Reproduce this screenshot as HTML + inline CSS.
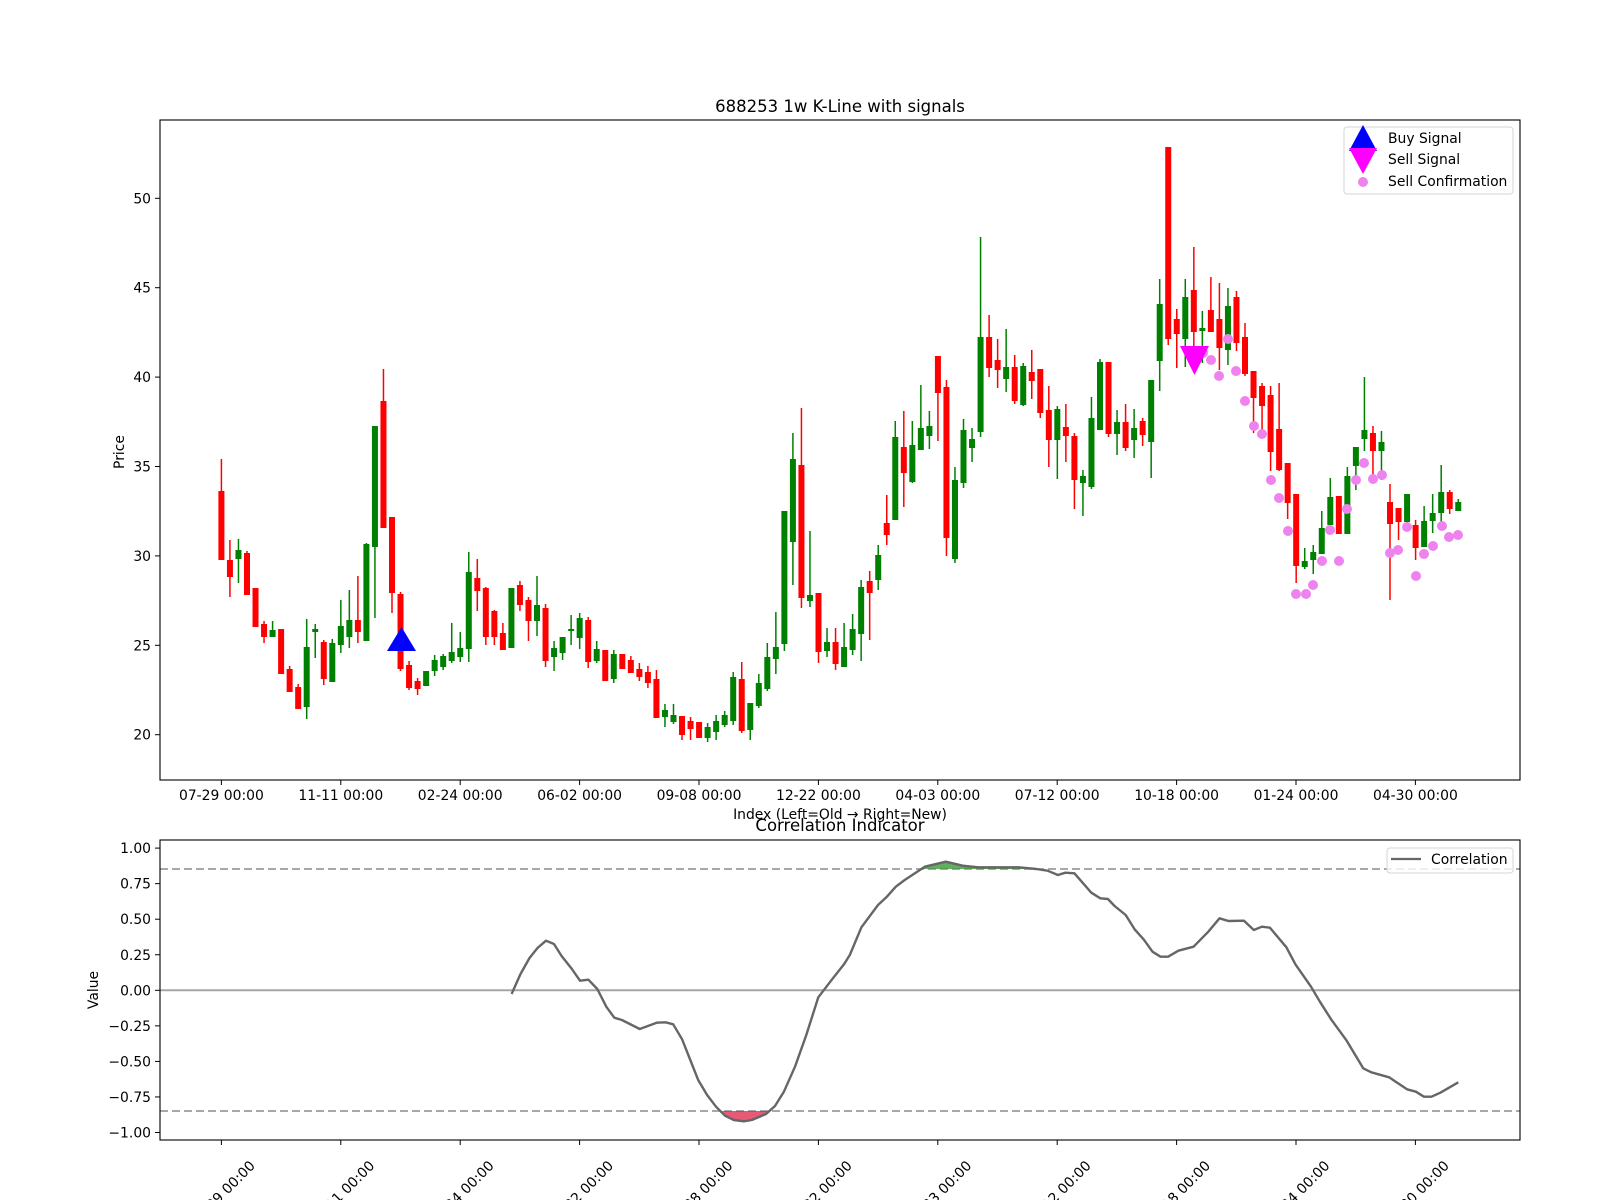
<!DOCTYPE html>
<html><head><meta charset="utf-8">
<style>
html,body{margin:0;padding:0;background:#fff;}
svg{display:block;font-family:"DejaVu Sans","Liberation Sans",sans-serif;}
</style></head>
<body>
<svg id="s" width="1600" height="1200" viewBox="0 0 1600 1200" xmlns="http://www.w3.org/2000/svg">
<rect width="1600" height="1200" fill="#fff"/>
<defs>
<clipPath id="cTop"><rect x="160" y="120" width="1360" height="660"/></clipPath>
<clipPath id="cBot"><rect x="160" y="840" width="1360" height="300"/></clipPath>
<clipPath id="cG"><rect x="160" y="840" width="1360" height="29"/></clipPath>
<clipPath id="cR"><rect x="160" y="1111" width="1360" height="29"/></clipPath>
</defs>
<g id="top" clip-path="url(#cTop)"></g>
<g id="bot" clip-path="url(#cBot)"></g>
<g id="axes"></g>
<text x="840" y="112" font-size="16.5" text-anchor="middle" fill="#000">688253 1w K-Line with signals</text>
<text x="840" y="819" font-size="13.9" text-anchor="middle" fill="#000">Index (Left=Old → Right=New)</text>
<text x="840" y="831" font-size="16.5" text-anchor="middle" fill="#000">Correlation Indicator</text>
<text x="0" y="0" font-size="13.9" text-anchor="middle" fill="#000" transform="translate(124,452) rotate(-90)">Price</text>
<text x="0" y="0" font-size="13.9" text-anchor="middle" fill="#000" transform="translate(98,990) rotate(-90)">Value</text>
<rect x="1344" y="127" width="169" height="67" rx="3" fill="#fff" fill-opacity="0.8" stroke="#d5d5d5" stroke-width="1"/>
<polygon points="1363,125 1349,151 1377,151" fill="#0000ff"/>
<polygon points="1349,148 1377,148 1363,174" fill="#ff00ff"/>
<circle cx="1363" cy="182" r="5" fill="#ee82ee"/>
<text x="1388" y="143" font-size="13.9" fill="#000">Buy Signal</text>
<text x="1388" y="164" font-size="13.9" fill="#000">Sell Signal</text>
<text x="1388" y="186" font-size="13.9" fill="#000">Sell Confirmation</text>
<rect x="1387" y="848" width="126" height="25" rx="3" fill="#fff" fill-opacity="0.8" stroke="#d5d5d5" stroke-width="1"/>
<line x1="1391" y1="859" x2="1421" y2="859" stroke="#666" stroke-width="2.2"/>
<text x="1431" y="864" font-size="13.9" fill="#000">Correlation</text>
</svg>
<script>
(function(){
var NS="http://www.w3.org/2000/svg";
function el(t,a,p){var e=document.createElementNS(NS,t);for(var k in a)e.setAttribute(k,a[k]);p.appendChild(e);return e;}
var top=document.getElementById('top'),bot=document.getElementById('bot'),ax=document.getElementById('axes');
var C=[
[0,'r',491,560,459,560],[1,'r',560,577,540,597],[2,'g',550,559,539,583],[3,'r',553,595,551,595],[4,'r',588,627,588,627],
[5,'r',624,637,621,643],[6,'g',630,637,621,637],[7,'r',629,674,629,674],[8,'r',669,692,666,692],[9,'r',687,709,684,709],
[10,'g',647,707,619,719],[11,'g',629,632,624,658],[12,'r',642,679,640,685],[13,'g',643,682,639,682],[14,'g',626,645,600,653],
[15,'g',620,637,590,648],[16,'r',620,632,576,643],[17,'g',544,641,543,641],[18,'g',426,547,426,618],[19,'r',401,528,369,528],
[20,'r',517,593,517,613],[21,'r',594,669,592,671],[22,'r',665,688,661,690],[23,'r',681,689,678,695],[24,'g',671,686,671,686],
[25,'g',660,671,655,676],[26,'g',656,667,654,670],[27,'g',652,661,623,663],[28,'g',648,657,632,662],[29,'g',572,649,552,662],
[30,'r',578,591,559,611],[31,'r',588,637,587,645],[32,'r',611,637,610,645],[33,'r',633,650,623,650],[34,'g',588,648,588,648],
[35,'r',585,605,581,611],[36,'r',600,621,597,641],[37,'g',605,621,576,636],[38,'r',608,661,604,667],[39,'g',648,657,641,671],
[40,'g',637,653,637,660],[41,'g',629,631,615,645],[42,'g',618,638,613,649],[43,'r',620,662,617,668],[44,'g',649,661,641,663],
[45,'r',650,681,650,681],[46,'g',654,679,650,683],[47,'r',654,669,654,669],[48,'r',660,673,656,673],[49,'r',669,677,663,681],
[50,'r',672,683,666,688],[51,'r',679,718,670,718],[52,'g',710,717,704,727],[53,'g',715,722,704,724],[54,'r',716,735,716,740],
[55,'r',721,729,717,740],[56,'r',722,738,722,738],[57,'g',727,738,723,742],[58,'g',721,732,715,740],[59,'g',715,725,711,727],
[60,'g',677,721,672,725],[61,'r',679,731,662,733],[62,'g',703,730,703,740],[63,'g',683,706,674,708],[64,'g',657,689,643,691],
[65,'g',647,659,612,674],[66,'g',511,644,511,651],[67,'g',459,542,433,585],[68,'r',465,598,408,608],[69,'g',595,601,531,607],
[70,'r',593,652,593,663],[71,'g',642,651,628,657],[72,'r',642,664,628,670],[73,'g',647,667,623,667],[74,'g',629,650,614,655],
[75,'g',587,634,580,661],[76,'r',581,593,571,640],[77,'g',555,580,545,590],[78,'r',523,535,495,545],[79,'g',437,520,421,520],
[80,'r',447,473,411,507],[81,'g',445,482,421,483],[82,'g',428,450,385,450],[83,'g',426,436,411,449],[84,'r',356,393,356,441],
[85,'r',387,538,380,556],[86,'g',480,559,467,563],[87,'g',430,483,419,488],[88,'g',439,448,428,462],[89,'g',337,432,237,437],
[90,'r',337,368,315,377],[91,'r',360,370,339,388],[92,'g',367,379,329,392],[93,'r',367,401,355,404],[94,'g',366,405,363,406],
[95,'r',372,381,350,399],[96,'r',369,413,369,418],[97,'r',410,440,386,467],[98,'g',409,440,406,479],[99,'r',427,436,404,462],
[100,'r',436,480,433,509],[101,'g',476,483,470,516],[102,'g',418,487,397,489],[103,'g',362,430,359,430],[104,'r',362,434,362,437],
[105,'g',422,434,410,455],[106,'r',422,448,404,451],[107,'g',428,440,409,458],[108,'r',421,435,418,446],[109,'g',380,442,380,478],
[110,'g',304,361,279,391],[111,'r',147,339,147,345],[112,'r',319,334,309,368],[113,'g',297,339,279,367],[114,'r',290,332,247,363],
[115,'g',328,331,311,363],[116,'r',310,332,277,332],[117,'r',319,348,283,370],[118,'g',306,350,288,365],[119,'r',297,343,291,351],
[120,'r',337,374,323,376],[121,'r',371,398,371,433],[122,'r',386,406,383,432],[123,'r',395,452,386,471],[124,'r',429,470,383,471],
[125,'r',463,503,463,519],[126,'r',494,566,494,583],[127,'g',561,567,548,569],[128,'g',552,560,545,574],[129,'g',528,554,511,554],
[130,'g',497,525,478,525],[131,'r',496,534,496,534],[132,'g',476,534,467,534],[133,'g',447,466,447,490],[134,'g',430,439,377,451],
[135,'r',433,451,426,476],[136,'g',442,451,431,480],[137,'r',502,524,484,600],[138,'r',508,522,508,540],[139,'g',494,522,494,530],
[140,'r',525,548,520,560],[141,'g',521,547,506,547],[142,'g',513,521,494,533],[143,'g',492,513,465,523],[144,'r',492,509,490,514],
[145,'g',502,511,499,511]];
C.forEach(function(c){
  var x=221.4+8.53*c[0],col=c[1]=='r'?'#ff0000':'#008000';
  el('line',{x1:x,y1:c[4],x2:x,y2:c[5],stroke:col,'stroke-width':1.5},top);
  var h=Math.max(c[3]-c[2],1.5);
  el('rect',{x:x-3,y:c[2],width:6,height:h,fill:col},top);
});
el('polygon',{points:'401.5,627 387,651 416,651',fill:'#0000ff'},top);
var D=[[1228,339],[1203,353],[1211,360],[1219,376],[1236,371],[1245,401],[1254,426],[1262,434],[1271,480],[1279,498],[1288,531],[1296,594],[1306,594],[1313,585],[1322,561],[1330,530],[1339,561],[1347,509],[1356,480],[1364,463],[1373,479],[1382,475],[1390,553],[1398,550],[1407,527],[1416,576],[1424,554],[1433,546],[1442,526],[1449,537],[1458,535]];
D.forEach(function(d){el('circle',{cx:d[0],cy:d[1],r:5,fill:'#ee82ee'},top);});
el('polygon',{points:'1180,346 1209,346 1194.5,375',fill:'#ff00ff'},top);
el('line',{x1:160,y1:990.3,x2:1520,y2:990.3,stroke:'#a6a6a6','stroke-width':2},bot);
el('line',{x1:160,y1:869,x2:1520,y2:869,stroke:'#8c8c8c','stroke-width':1.5,'stroke-dasharray':'8,4'},bot);
el('line',{x1:160,y1:1111,x2:1520,y2:1111,stroke:'#8c8c8c','stroke-width':1.5,'stroke-dasharray':'8,4'},bot);
var P=[[511.6,994],[520.5,974],[529.5,958],[537.5,948],[546,940.7],[554,944],[561.6,956],[571.9,969],[580,980.7],[588.4,979.7],[597.3,989],[606.3,1006.7],[614.3,1017.7],[621.9,1020],[639.7,1029],[656.7,1022.7],[665.6,1022.3],[673.2,1024.3],[682.1,1039.3],[698.2,1080],[707.1,1095],[716,1106.7],[725,1115.7],[733.9,1120],[743.8,1121.3],[751.8,1120],[766,1114],[775,1106],[783.9,1091.7],[795,1066.7],[806.3,1035],[818.3,997.3],[832.1,979.3],[844.2,964],[849.8,955],[861.4,927.3],[878,905],[886.9,896.7],[895.8,886.7],[904.7,880],[924.8,866.7],[945.8,861.7],[962.8,865.7],[978.4,867.3],[1018.6,867.3],[1036.4,869],[1047.6,870.7],[1057.9,875],[1065.4,872.7],[1074.4,873.3],[1091.3,892.7],[1100.3,898.3],[1107.9,899],[1114.6,906],[1125.7,915],[1134.6,929.3],[1143.6,939.3],[1152.5,951.7],[1160.5,956.7],[1168.1,956.7],[1178.4,950.7],[1193.6,946.7],[1208.3,931.7],[1219.5,918.3],[1228.4,921],[1244,920.7],[1253.8,930],[1261.9,926.7],[1269.9,927.7],[1286.4,947.3],[1295.4,964.3],[1311,986.7],[1319.9,1001.7],[1331.1,1019.3],[1346.7,1040.7],[1363.2,1068.3],[1371.3,1072.3],[1389.1,1077.3],[1407,1089.3],[1415.9,1091.7],[1423.9,1096.7],[1431.5,1096.7],[1440.4,1092.7],[1458.3,1082.3]];
var pts=P.map(function(p){return p.join(',');}).join(' ');
var gA=el('g',{'clip-path':'url(#cG)'},bot);
el('polygon',{points:pts+' 1458,869 511,869',fill:'#3a9a3a','fill-opacity':'0.8'},gA);
var rA=el('g',{'clip-path':'url(#cR)'},bot);
el('polygon',{points:pts+' 1458,1111 511,1111',fill:'#dc143c','fill-opacity':'0.7'},rA);
el('polyline',{points:pts,fill:'none',stroke:'#666','stroke-width':2.4,'stroke-linejoin':'round'},bot);
el('rect',{x:160,y:120,width:1360,height:660,fill:'none',stroke:'#000','stroke-width':1.1},ax);
el('rect',{x:160,y:840,width:1360,height:300,fill:'none',stroke:'#000','stroke-width':1.1},ax);
for(var p=20;p<=50;p+=5){var y=734.7-(p-20)*17.88;
 el('line',{x1:155,y1:y,x2:160,y2:y,stroke:'#000','stroke-width':1},ax);
 var t=el('text',{x:151,y:y+5,'font-size':13.9,'text-anchor':'end',fill:'#000'},ax);t.textContent=p;}
var vl=['1.00','0.75','0.50','0.25','0.00','−0.25','−0.50','−0.75','−1.00'];
for(var k=0;k<9;k++){var v=1-k*0.25,y=990.3-v*142.2;
 el('line',{x1:155,y1:y,x2:160,y2:y,stroke:'#000','stroke-width':1},ax);
 var t=el('text',{x:151,y:y+5,'font-size':13.9,'text-anchor':'end',fill:'#000'},ax);t.textContent=vl[k];}
var L=['07-29 00:00','11-11 00:00','02-24 00:00','06-02 00:00','09-08 00:00','12-22 00:00','04-03 00:00','07-12 00:00','10-18 00:00','01-24 00:00','04-30 00:00'];
L.forEach(function(s,i){var x=221.4+119.4*i;
 el('line',{x1:x,y1:780,x2:x,y2:785,stroke:'#000','stroke-width':1},ax);
 var t=el('text',{x:x,y:800,'font-size':13.9,'text-anchor':'middle',fill:'#000'},ax);t.textContent=s;
 el('line',{x1:x,y1:1140,x2:x,y2:1145,stroke:'#000','stroke-width':1},ax);
 var t2=el('text',{x:0,y:5,'font-size':13.9,'text-anchor':'middle',fill:'#000',transform:'translate('+(x+1)+',1193) rotate(-45)'},ax);t2.textContent=s;
});
})();
</script>
</body></html>
